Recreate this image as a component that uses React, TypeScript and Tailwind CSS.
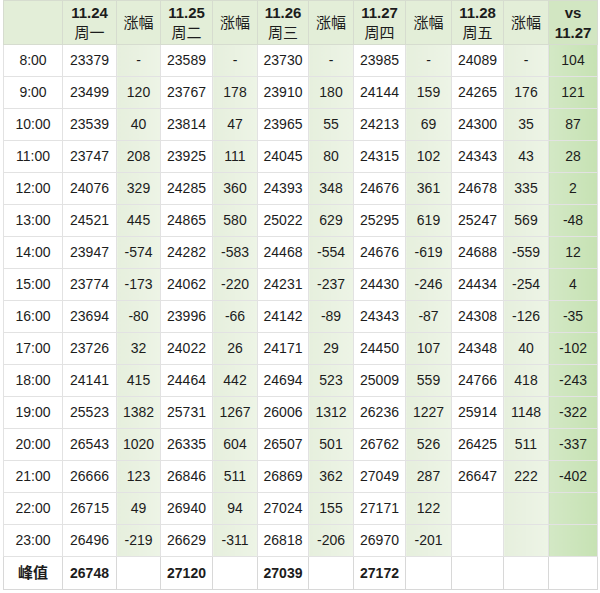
const times = ['8:00', '9:00', '10:00', '11:00', '12:00', '13:00', '14:00', '15:00', '16:00', '17:00', '18:00', '19:00', '20:00', '21:00', '22:00', '23:00'];

const days = [
  {
    date: '11.24', week: '周一', peak: '26748',
    vals: ['23379', '23499', '23539', '23747', '24076', '24521', '23947', '23774', '23694', '23726', '24141', '25523', '26543', '26666', '26715', '26496'],
    gain: ['-', '120', '40', '208', '329', '445', '-574', '-173', '-80', '32', '415', '1382', '1020', '123', '49', '-219'],
  },
  {
    date: '11.25', week: '周二', peak: '27120',
    vals: ['23589', '23767', '23814', '23925', '24285', '24865', '24282', '24062', '23996', '24022', '24464', '25731', '26335', '26846', '26940', '26629'],
    gain: ['-', '178', '47', '111', '360', '580', '-583', '-220', '-66', '26', '442', '1267', '604', '511', '94', '-311'],
  },
  {
    date: '11.26', week: '周三', peak: '27039',
    vals: ['23730', '23910', '23965', '24045', '24393', '25022', '24468', '24231', '24142', '24171', '24694', '26006', '26507', '26869', '27024', '26818'],
    gain: ['-', '180', '55', '80', '348', '629', '-554', '-237', '-89', '29', '523', '1312', '501', '362', '155', '-206'],
  },
  {
    date: '11.27', week: '周四', peak: '27172',
    vals: ['23985', '24144', '24213', '24315', '24676', '25295', '24676', '24430', '24343', '24450', '25009', '26236', '26762', '27049', '27171', '26970'],
    gain: ['-', '159', '69', '102', '361', '619', '-619', '-246', '-87', '107', '559', '1227', '526', '287', '122', '-201'],
  },
  {
    date: '11.28', week: '周五', peak: '',
    vals: ['24089', '24265', '24300', '24343', '24678', '25247', '24688', '24434', '24308', '24348', '24766', '25914', '26425', '26647', '', ''],
    gain: ['-', '176', '35', '43', '335', '569', '-559', '-254', '-126', '40', '418', '1148', '511', '222', '', ''],
  },
];

const vs = ['104', '121', '87', '28', '2', '-48', '12', '4', '-35', '-102', '-243', '-322', '-337', '-402', '', ''];

const dateW = ['w-[54px]', 'w-[52px]', 'w-[51px]', 'w-[52px]', 'w-[52px]'];
const gainW = ['w-[44px]', 'w-[45px]', 'w-[45px]', 'w-[46px]', 'w-[45px]'];

export default function App() {
  return (
    <div
      className="w-[600px] h-[593px] bg-white pl-[3px] text-[#1c1c1c]"
      style={{ fontFamily: '"Liberation Sans", Arial, "Noto Sans CJK SC", sans-serif' }}
    >
      <table className="table-fixed border-collapse w-[594px] text-[14px] text-center">
        <colgroup>
          <col className="w-[59px]" />
          {days.map((d, i) => (
            <>
              <col key={d.date + 'a'} className={dateW[i]} />
              <col key={d.date + 'b'} className={gainW[i]} />
            </>
          ))}
          <col className="w-[49px]" />
        </colgroup>
        <thead>
          <tr className="h-[44px] bg-[#e3eed8] text-[15px] font-bold leading-[20px]">
            <th className="border border-[#d6dccf]"></th>
            {days.map((d) => (
              <>
                <th key={d.date + 'h'} className="border border-[#d6dccf] font-bold">
                  <div>{d.date}</div>
                  <div className="font-normal">{d.week}</div>
                </th>
                <th key={d.date + 'g'} className="border border-[#d6dccf] font-normal">涨幅</th>
              </>
            ))}
            <th className="border border-[#d6dccf] bg-[#d2e6c2]">
              <div>vs</div>
              <div>11.27</div>
            </th>
          </tr>
        </thead>
        <tbody>
          {times.map((t, r) => (
            <tr key={t} className="h-[32px]">
              <td className="border border-[#e2e2e2] bg-white">{t}</td>
              {days.map((d) => (
                <>
                  <td key={d.date + r + 'v'} className="border border-[#e2e2e2] bg-white">{d.vals[r]}</td>
                  <td key={d.date + r + 'g'} className="border border-[#e2e2e2] bg-gradient-to-r from-[#e6efdd] to-[#edf4e6]">{d.gain[r]}</td>
                </>
              ))}
              <td className="border border-[#e2e2e2] bg-gradient-to-r from-[#d3e8c5] to-[#c6e2b3]">{vs[r]}</td>
            </tr>
          ))}
          <tr className="h-[33px] font-bold bg-white">
            <td className="border border-[#d8d8d8] text-[15px]">峰值</td>
            {days.map((d) => (
              <>
                <td key={d.date + 'p'} className="border border-[#d8d8d8]">{d.peak}</td>
                <td key={d.date + 'pg'} className="border border-[#d8d8d8]"></td>
              </>
            ))}
            <td className="border border-[#d8d8d8]"></td>
          </tr>
        </tbody>
      </table>
    </div>
  );
}
